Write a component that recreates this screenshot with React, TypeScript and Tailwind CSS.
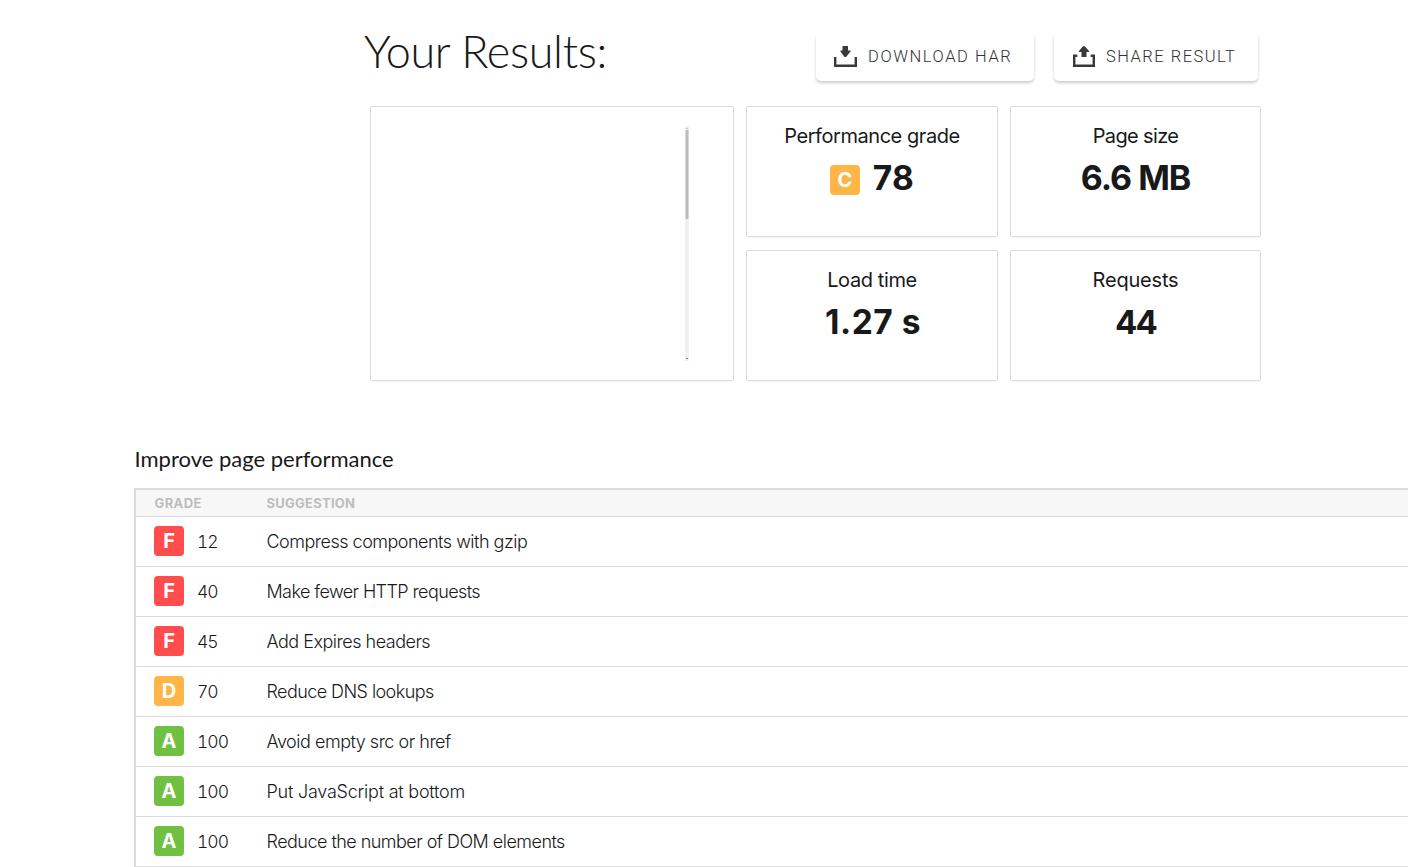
interface Suggestion {
  grade: string
  score: number
  text: string
  spacing: string
}

const suggestions: Suggestion[] = [
  { grade: 'F', score: 12, text: 'Compress components with gzip', spacing: 'tracking-[-0.5px]' },
  { grade: 'F', score: 40, text: 'Make fewer HTTP requests', spacing: 'tracking-[-0.59px]' },
  { grade: 'F', score: 45, text: 'Add Expires headers', spacing: 'tracking-[-0.5px]' },
  { grade: 'D', score: 70, text: 'Reduce DNS lookups', spacing: 'tracking-[-0.57px]' },
  { grade: 'A', score: 100, text: 'Avoid empty src or href', spacing: 'tracking-[-0.48px]' },
  { grade: 'A', score: 100, text: 'Put JavaScript at bottom', spacing: 'tracking-[-0.22px]' },
  { grade: 'A', score: 100, text: 'Reduce the number of DOM elements', spacing: 'tracking-[-0.53px]' },
]

const gradeColors: Record<string, string> = {
  A: 'bg-[#70c141]',
  C: 'bg-[#ffb647]',
  D: 'bg-[#ffb647]',
  F: 'bg-[#ff4d4d]',
}

function Grade({ grade }: { grade: string }) {
  return (
    <span className={`flex h-[30px] w-[30px] shrink-0 items-center justify-center rounded-[4px] text-[20px] leading-none font-bold text-white ${gradeColors[grade]}`}>
      {grade}
    </span>
  )
}

interface StatProps {
  label: string
  value: string
  grade?: string
  labelSpacing: string
  valueSpacing: string
}

function Stat({ label, value, grade, labelSpacing, valueSpacing }: StatProps) {
  return (
    <div className="flex flex-col items-center rounded-[2px] border border-[#dcdcdc] pt-[14px] shadow-[0_1px_2px_rgba(0,0,0,0.05)]">
      <h3 className={`text-[20px] leading-[30px] font-normal ${labelSpacing}`}>{label}</h3>
      <div className="mt-[6px] flex h-[42px] items-center gap-[13px]">
        {grade && <div className="pt-[4px]"><Grade grade={grade} /></div>}
        <span className={`leading-[42px] font-bold ${valueSpacing}`}>{value}</span>
      </div>
    </div>
  )
}

export default function App() {
  return (
    <div className="h-[867px] w-[1408px] overflow-hidden bg-white font-['Inter',sans-serif] text-[#18191a]">
      {/* Title and actions */}
      <div className="ml-[364px] flex h-[106px] w-[895px] items-start">
        <h1 className="mt-[21px] w-[452px] font-['Lato',sans-serif] text-[45px] leading-[60px] font-light tracking-[-0.35px]">Your Results:</h1>
        <div className="mt-[32px] flex gap-[20px] font-['Roboto',sans-serif] text-[16.5px] font-[350] text-[#303234]">
          <button className="flex h-[49px] w-[218px] items-center rounded-[5px] pl-[18px] tracking-[1.58px] whitespace-nowrap shadow-[0_2px_3px_rgba(0,0,0,0.2)]">
            <svg width="24" height="21" viewBox="0 0 24 21" fill="none" className="mr-[10px]">
              <path d="M1.200 11v8.800h20.600V11" stroke="#38393b" strokeWidth="2.400" />
              <path d="M8.500 0.500q0-.5.5-.5h4.500q.5 0 .5.5V4.500h2.500v1L12 11h-1.500L6.500 5.500v-1h2z" fill="#38393b" />
            </svg>
            <span className="pt-[2px]">DOWNLOAD HAR</span>
          </button>
          <button className="flex h-[49px] w-[204px] items-center rounded-[5px] pl-[18px] tracking-[1.48px] whitespace-nowrap shadow-[0_2px_3px_rgba(0,0,0,0.2)]">
            <svg width="24" height="21" viewBox="0 0 24 21" fill="none" className="mr-[10px]">
              <path d="M5.300 9.800H2.200v10h19.600v-10h-3.100" stroke="#38393b" strokeWidth="2.400" />
              <path d="M9.500 11V6H7V5l4-4.700h1.800L17 5v1h-2.500v5z" fill="#38393b" />
            </svg>
            <span className="pt-[2px]">SHARE RESULT</span>
          </button>
        </div>
      </div>

      {/* Summary */}
      <div className="ml-[370px] flex h-[275px] gap-[12px]">
        <div className="flex w-[364px] justify-end rounded-[2px] border border-[#dcdcdc] pt-[19px] pr-[44px] shadow-[0_1px_2px_rgba(0,0,0,0.05)]">
          <div className="flex h-[235px] w-[4px] flex-col items-center bg-[#f0f0f0]">
            <div className="mt-[2px] h-px w-[2px] bg-[#c9c9c9]" />
            <div className="mt-px h-[89px] w-full border-x border-[#d8d8d8] bg-[#bcbcbc]" />
            <div className="mt-auto mb-[2px] h-px w-[2px] bg-[#777]" />
          </div>
        </div>
        <div className="grid w-[515px] grid-cols-[252px_251px] grid-rows-[131px_131px] gap-x-[12px] gap-y-[13px]">
          <Stat label="Performance grade" value="78" grade="C" labelSpacing="tracking-[-0.45px]" valueSpacing="text-[33.5px] tracking-[0.3px]" />
          <Stat label="Page size" value="6.6 MB" labelSpacing="tracking-[-0.65px]" valueSpacing="text-[34px] tracking-[-1px]" />
          <Stat label="Load time" value="1.27 s" labelSpacing="tracking-[-0.4px]" valueSpacing="text-[33.5px] tracking-[0.5px] pl-[2px]" />
          <Stat label="Requests" value="44" labelSpacing="tracking-[-0.2px]" valueSpacing="text-[33px] tracking-[-1.8px]" />
        </div>
      </div>

      {/* Suggestions */}
      <div className="ml-[134px] pt-[62px]">
        <h2 className="h-[45px] pl-[0.5px] font-['Lato',sans-serif] text-[22px] leading-[32px]">Improve page performance</h2>
        <div className="border-t-2 border-l-2 border-[#dcdcdc]">
          <div className="flex h-[27px] items-center border-b border-[#dcdcdc] bg-[#f7f7f7] pt-[2px] pl-[18.5px] text-[13px] font-bold text-[#bdbdbd]">
            <span className="w-[112px] tracking-[0.4px]">GRADE</span>
            <span className="tracking-[0.25px]">SUGGESTION</span>
          </div>
          {suggestions.map((s) => (
            <div key={s.text} className="flex h-[50px] items-center border-b border-[#dcdcdc] pl-[18px] text-[18px] font-light">
              <div className="pb-[2px]"><Grade grade={s.grade} /></div>
              <span className="w-[82.5px] pt-[2px] pl-[13px] text-[17.5px] tracking-[-1px] tabular-nums">{s.score}</span>
              <span className={s.spacing}>{s.text}</span>
            </div>
          ))}
        </div>
      </div>
    </div>
  )
}
